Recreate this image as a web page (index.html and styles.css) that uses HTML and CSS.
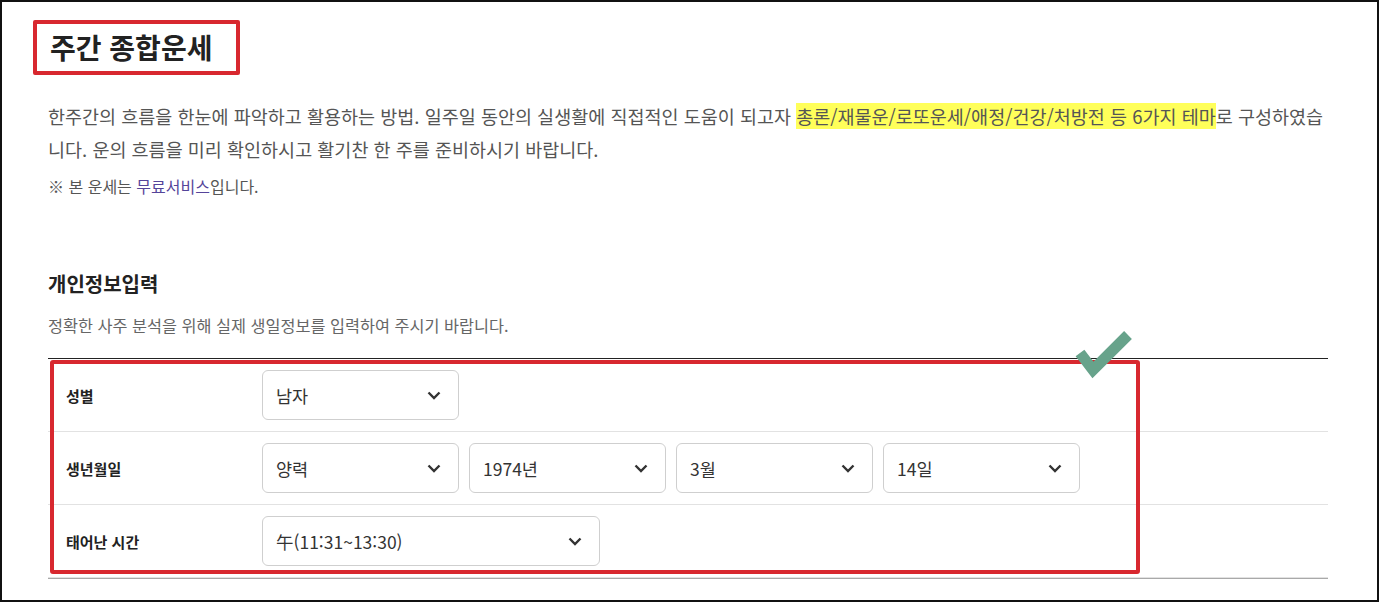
FILE: index.html
```html
<!DOCTYPE html>
<html lang="ko">
<head>
<meta charset="utf-8">
<title>주간 종합운세</title>
<link rel="stylesheet" href="styles.css">
</head>
<body>
<main class="page">
  <h1 class="title">주간 종합운세</h1>
  <p class="intro">한주간의 흐름을 한눈에 파악하고 활용하는 방법. 일주일 동안의 실생활에 직접적인 도움이 되고자 <mark class="hl">총론/재물운/로또운세/애정/건강/처방전 등 6가지 테마</mark>로 구성하였습니다. 운의 흐름을 미리 확인하시고 활기찬 한 주를 준비하시기 바랍니다.</p>
  <p class="note">※ 본 운세는 <span class="free">무료서비스</span>입니다.</p>

  <section class="form">
    <h2 class="form-title">개인정보입력</h2>
    <p class="form-desc">정확한 사주 분석을 위해 실제 생일정보를 입력하여 주시기 바랍니다.</p>

    <div class="table">
      <div class="row">
        <div class="label">성별</div>
        <div class="fields">
          <div class="select"><span>남자</span><svg class="chev" viewBox="0 0 14 9" width="14" height="9"><polyline points="1.5,1.5 7,7 12.5,1.5"/></svg></div>
        </div>
      </div>
      <div class="row">
        <div class="label">생년월일</div>
        <div class="fields">
          <div class="select"><span>양력</span><svg class="chev" viewBox="0 0 14 9" width="14" height="9"><polyline points="1.5,1.5 7,7 12.5,1.5"/></svg></div>
          <div class="select"><span>1974년</span><svg class="chev" viewBox="0 0 14 9" width="14" height="9"><polyline points="1.5,1.5 7,7 12.5,1.5"/></svg></div>
          <div class="select"><span>3월</span><svg class="chev" viewBox="0 0 14 9" width="14" height="9"><polyline points="1.5,1.5 7,7 12.5,1.5"/></svg></div>
          <div class="select"><span>14일</span><svg class="chev" viewBox="0 0 14 9" width="14" height="9"><polyline points="1.5,1.5 7,7 12.5,1.5"/></svg></div>
        </div>
      </div>
      <div class="row">
        <div class="label">태어난 시간</div>
        <div class="fields">
          <div class="select select-wide"><span>午(11:31~13:30)</span><svg class="chev" viewBox="0 0 14 9" width="14" height="9"><polyline points="1.5,1.5 7,7 12.5,1.5"/></svg></div>
        </div>
      </div>

      <div class="annot-box"></div>
      <svg class="annot-check" viewBox="0 0 70 60" width="70" height="60"><polyline points="10,28 23,45 58,10"/></svg>
    </div>
  </section>
</main>
</body>
</html>
```

FILE: styles.css
```css
* { box-sizing: border-box; }

html, body { margin: 0; padding: 0; }

body {
  height: 602px;
  border: 2px solid #111;
  overflow: hidden;
  background: #fff;
  font-family: "Noto Sans CJK KR", "Noto Sans", sans-serif;
  color: #333;
}

.page {
  width: 1326px;
  padding: 18px 0 0 46px;
}

.title {
  width: fit-content;
  margin: 0 0 0 -15px;
  padding: 0 24px 0 13px;
  border: 4px solid #d8282f;
  border-radius: 2px;
  font-size: 28px;
  font-weight: 700;
  line-height: 47px;
  color: #222;
}

.intro {
  width: 1280px;
  margin: 25px 0 0;
  font-size: 18.5px;
  line-height: 33px;
  color: #555;
}

.hl {
  background: #ffff5a;
  color: #555;
}

.note {
  margin: 8px 0 0;
  font-size: 16px;
  line-height: 24px;
  color: #555;
}

.free { color: #55449a; }

.form-title {
  margin: 72px 0 0;
  font-size: 20px;
  font-weight: 700;
  line-height: 28px;
  color: #222;
}

.form-desc {
  margin: 16px 0 0;
  font-size: 16.3px;
  line-height: 22px;
  color: #666;
}

.table {
  position: relative;
  width: 1280px;
  margin-top: 22px;
  border-top: 1px solid #222;
  border-bottom: 1px solid #a9a9a9;
}

.row {
  display: grid;
  grid-template-columns: 214px 1fr;
  align-items: center;
  height: 73px;
  border-bottom: 1px solid #e2e2e2;
}

.row:last-of-type {
  height: 72px;
  border-bottom: none;
}

.label {
  padding-left: 18px;
  font-size: 15px;
  font-weight: 700;
  color: #222;
}

.fields {
  display: flex;
  gap: 10px;
}

.select {
  display: flex;
  align-items: center;
  justify-content: space-between;
  width: 197px;
  height: 50px;
  padding: 0 17px 0 13px;
  border: 1px solid #cfcfcf;
  border-radius: 6px;
  font-size: 17.5px;
  color: #333;
  background: #fff;
}

.select-wide { width: 338px; }

.chev polyline {
  fill: none;
  stroke: #333;
  stroke-width: 2.4;
}

.annot-box {
  position: absolute;
  left: 2px;
  top: 1px;
  width: 1090px;
  height: 214px;
  border: 4px solid #d8282f;
  border-radius: 3px;
  pointer-events: none;
}

.annot-check {
  position: absolute;
  left: 1022px;
  top: -34px;
}

.annot-check polyline {
  fill: none;
  stroke: #67a38b;
  stroke-width: 11;
  stroke-linejoin: miter;
}
```
